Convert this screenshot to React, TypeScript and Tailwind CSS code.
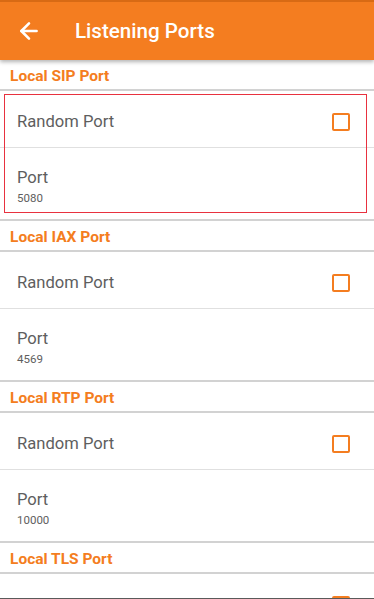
import { ArrowLeft } from 'lucide-react';

type Section = {
  title: string;
  port: string;
  highlighted?: boolean;
};

const sections: Section[] = [
  { title: 'Local SIP Port', port: '5080', highlighted: true },
  { title: 'Local IAX Port', port: '4569' },
  { title: 'Local RTP Port', port: '10000' },
  { title: 'Local TLS Port', port: '5061' },
];

function PortSection({ section }: { section: Section }) {
  return (
    <div>
      {/* En-tête de section */}
      <div className="h-[31px] pl-[10px] pt-[5px] flex items-center border-b-2 border-[#d2d2d2]">
        <span className="text-[15.5px] font-bold text-[#f47d20]">{section.title}</span>
      </div>

      <div className="relative">
        <div className="h-[57px] pl-[17px] pr-[24px] pt-[6px] flex items-center justify-between border-b border-[#e0e0e0]">
          <span className="text-[16.6px] text-[#5e5e5e]">Random Port</span>
          <div className="w-[18px] h-[18px] border-2 border-[#f47d20] rounded-[2px]" />
        </div>
        <div className="h-[73px] pl-[17px] pt-[8px] flex flex-col justify-center border-b-2 border-[#d2d2d2]">
          <span className="text-[16.6px] leading-[20px] text-[#5e5e5e]">Port</span>
          <span className="text-[11.5px] leading-[20px] text-[#5e5e5e]">{section.port}</span>
        </div>

        {section.highlighted && (
          <div className="absolute left-[4px] right-[7px] top-[3px] bottom-[8px] border border-[#e8313f] pointer-events-none" />
        )}
      </div>
    </div>
  );
}

export default function App() {
  return (
    <div
      className="w-[374px] h-[599px] overflow-hidden bg-white flex flex-col border-b border-[#5a5a5a]"
      style={{ fontFamily: 'Roboto, "Noto Sans", sans-serif' }}
    >
      {/* Barre du haut */}
      <header className="relative z-10 h-[60px] shrink-0 bg-[#f47d20] border-t-2 border-[#d86a14] flex items-center shadow-[0_2px_4px_rgba(0,0,0,0.3)]">
        <button className="w-[58px] pl-[16px] flex items-center text-white">
          <ArrowLeft size={26} strokeWidth={2.4} />
        </button>
        <h1 className="ml-[17px] text-[20.6px] font-medium text-white">Listening Ports</h1>
      </header>

      <main className="flex-1 overflow-hidden">
        {sections.map(s => (
          <PortSection key={s.title} section={s} />
        ))}
      </main>
    </div>
  );
}
